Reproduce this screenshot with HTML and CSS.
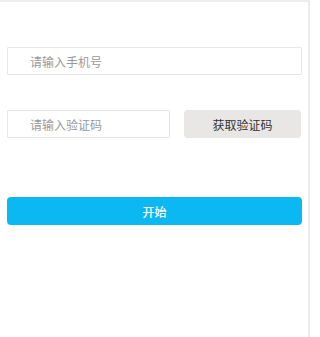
FILE: index.html
```html
<!DOCTYPE html>
<html lang="zh-CN">
<head>
<meta charset="utf-8">
<title>登录</title>
<link rel="stylesheet" href="styles.css">
</head>
<body>
<div class="page">
  <form class="form">
    <div class="row">
      <input class="field field-full" type="text" placeholder="请输入手机号">
    </div>
    <div class="row row-code">
      <input class="field field-code" type="text" placeholder="请输入验证码">
      <button class="btn-code" type="button">获取验证码</button>
    </div>
    <div class="row row-submit">
      <button class="btn-start" type="button">开始</button>
    </div>
  </form>
</div>
</body>
</html>
```

FILE: styles.css
```css
html, body {
  margin: 0;
  padding: 0;
  background: #fff;
}

body {
  font-family: "Noto Sans CJK SC", "Noto Sans", sans-serif;
  font-size: 12px;
  color: #333;
}

.page {
  box-sizing: border-box;
  width: 310px;
  height: 337px;
  border-top: 2px solid #ededed;
  border-right: 2px solid #ededed;
  padding: 45px 7px 0 7px;
}

.form {
  display: flex;
  flex-direction: column;
  width: 295px;
}

.row {
  display: flex;
  align-items: center;
}

.row-code {
  margin-top: 35px;
  gap: 14px;
}

.row-submit {
  margin-top: 59px;
}

.field {
  box-sizing: border-box;
  height: 28px;
  border: 1px solid #e6e6e6;
  border-radius: 1px;
  padding: 0 0 0 22px;
  font-family: inherit;
  font-size: 12px;
  color: #333;
  outline: none;
  background: #fff;
}

.field::placeholder {
  color: #9a9a9a;
}

.field-full {
  width: 295px;
}

.field-code {
  width: 163px;
}

.btn-code {
  box-sizing: border-box;
  width: 117px;
  height: 28px;
  border: none;
  border-radius: 4px;
  background: #e8e7e5;
  color: #333;
  font-family: inherit;
  font-size: 12px;
  padding: 0;
}

.btn-start {
  box-sizing: border-box;
  width: 295px;
  height: 28px;
  border: none;
  border-radius: 4px;
  background: #0cb8f1;
  color: #fff;
  font-family: inherit;
  font-size: 12px;
  font-weight: 500;
  padding: 0;
}
```
